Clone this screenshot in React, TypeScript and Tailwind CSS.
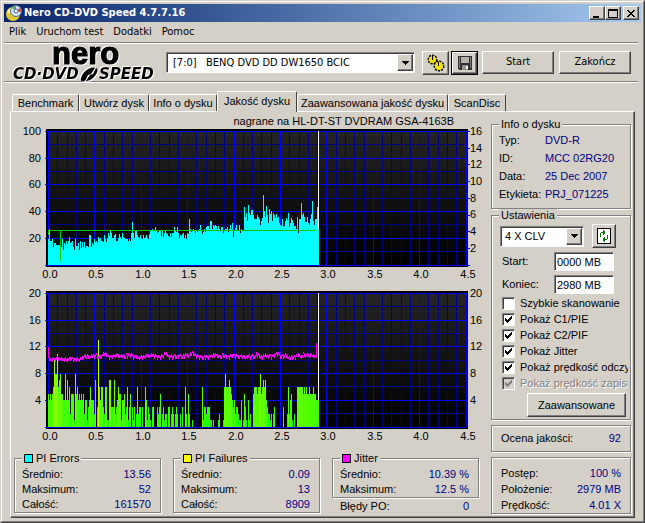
import type { ReactNode } from 'react';
import { clsx } from 'clsx';

const sans = "font-['Liberation_Sans',Arial,sans-serif]";
const tahoma = "font-['DejaVu_Sans_Condensed','Noto_Sans',sans-serif]";
const raised = 'bg-[#d4d0c8] border border-t-white border-l-white border-b-[#404040] border-r-[#404040] shadow-[inset_-1px_-1px_0_#808080]';
const sunken = 'bg-white border border-t-[#808080] border-l-[#808080] border-b-white border-r-white shadow-[inset_1px_1px_0_#404040]';
const etched = 'border border-[#808080] shadow-[1px_1px_0_#fff,inset_1px_1px_0_#fff]';

// one sample per pixel column, in pixels
const pie = [
  26, 36, 24, 24, 26, 18, 22, 22, 20, 20, 20, 20, 20, 18, 26, 15, 22, 20, 24, 21, 24, 28, 22, 23, 24, 18, 15, 26, 19, 19,
  22, 15, 24, 17, 23, 18, 23, 17, 19, 19, 18, 30, 30, 18, 22, 20, 26, 23, 24, 22, 28, 26, 27, 24, 24, 23, 30, 26, 23, 27,
  32, 29, 34, 32, 27, 27, 30, 31, 24, 24, 27, 31, 28, 26, 32, 28, 27, 26, 26, 26, 24, 26, 24, 32, 43, 32, 27, 35, 35, 30,
  28, 27, 30, 27, 26, 30, 27, 28, 30, 27, 26, 31, 34, 34, 36, 34, 34, 38, 35, 32, 33, 34, 34, 29, 34, 28, 32, 35, 32,
  31, 29, 28, 32, 28, 32, 32, 38, 34, 33, 38, 32, 27, 30, 29, 31, 32, 27, 30, 26, 32, 31, 46, 36, 33, 34, 36, 34, 32,
  35, 33, 35, 36, 40, 34, 31, 33, 36, 33, 38, 39, 39, 36, 44, 44, 36, 40, 39, 40, 39, 36, 39, 36, 35, 38, 38, 32, 34, 36,
  36, 38, 33, 36, 40, 36, 42, 28, 34, 37, 40, 34, 34, 40, 32, 36, 34, 34, 58, 48, 52, 44, 60, 52, 50, 55, 55, 50, 46,
  46, 46, 50, 48, 46, 40, 44, 47, 70, 54, 48, 59, 50, 42, 56, 51, 54, 44, 52, 50, 47, 51, 47, 48, 42, 40, 39, 46, 38, 39,
  44, 47, 45, 52, 38, 42, 47, 45, 42, 39, 39, 36, 48, 32, 46, 46, 62, 50, 52, 48, 43, 43, 48, 42, 40, 46, 51, 64, 44, 40,
  46, 46, 58, 36,
];
const pif = [
  5, 4, 5, 4, 5, 6, 10, 8, 8, 11, 6, 7, 8, 5, 5, 4, 4, 8, 4, 7, 4, 6, 2, 5, 5, 5, 1, 8, 5, 6,
  4, 5, 4, 5, 4, 5, 2, 4, 4, 1, 3, 4, 6, 4, 4, 4, 2, 7, 0, 3, 13, 6, 4, 6, 6, 3, 2, 6, 6, 1,
  1, 7, 7, 3, 3, 3, 7, 2, 3, 4, 6, 5, 5, 1, 4, 4, 5, 2, 3, 6, 1, 3, 5, 0, 3, 1, 3, 0, 2, 6,
  2, 3, 3, 0, 3, 0, 0, 6, 4, 1, 3, 2, 1, 0, 3, 3, 0, 0, 0, 3, 2, 3, 5, 0, 2, 3, 1, 2, 2, 0,
  3, 3, 0, 2, 3, 2, 0, 2, 3, 2, 0, 0, 2, 0, 3, 0, 0, 6, 2, 0, 5, 2, 0, 0, 1, 0, 0, 0, 0, 0,
  0, 0, 0, 0, 6, 1, 3, 3, 2, 3, 3, 3, 1, 1, 0, 1, 0, 0, 0, 0, 1, 2, 0, 0, 0, 1, 6, 8, 6, 6,
  6, 7, 6, 5, 4, 3, 4, 2, 3, 3, 2, 1, 1, 4, 0, 1, 5, 3, 1, 0, 4, 1, 2, 0, 0, 5, 6, 6, 6, 5,
  6, 6, 8, 5, 6, 7, 6, 7, 4, 3, 2, 2, 1, 2, 0, 2, 3, 0, 0, 0, 0, 0, 0, 0, 0, 3, 0, 0, 0, 2,
  6, 2, 4, 5, 1, 0, 2, 0, 0, 6, 6, 6, 6, 6, 6, 5, 6, 5, 6, 5, 5, 6, 5, 5, 5, 6, 5, 5, 4, 4, 4,
];
const jitter =
  '089a98998789989a98a99888899998a988776575677565654676665343456767656554566565674646545767678776' +
  '7676565664546567677566343567657656766556756454653423456567677867677665645455666745656767' +
  '5655565667657667766576567636457675646565575654343567566457878677675645766346545745656';

const px = 34;
const py = 3;
const plotW = 418;
const plotH = 134;

function Chart({ label, left, right, rightTicks, children }: {
  label: string; left: string[]; right: string[]; rightTicks?: boolean; children: ReactNode;
}) {
  const cols = Array.from({ length: 46 }, (_, i) => i);
  const rows = Array.from({ length: 11 }, (_, i) => i);
  const id = label.replace(/ /g, '');
  return (
    <svg viewBox="0 0 470 156" role="img" aria-label={label} className={clsx('block h-auto w-full overflow-visible text-[11px]', sans)}>
      <defs>
        <linearGradient id={id} x1="0" y1="0" x2="0" y2="1">
          <stop offset="0" stopColor="#242424" />
          <stop offset="1" stopColor="#000" />
        </linearGradient>
      </defs>
      <g shapeRendering="crispEdges">
        <rect x="32" y="1" width="422" height="138" fill="#000" />
        <rect x={px} y={py} width={plotW} height={plotH} fill={`url(#${id})`} />
        {cols.filter((i) => i % 5).map((i) => (
          <rect key={i} x={px + Math.round(i * 9.28)} y={py} width="1" height={plotH} fill="#000084" />
        ))}
        {rows.filter((i) => i % 2).map((i) => (
          <rect key={i} x={px} y={py + Math.round(i * 13.35)} width={plotW} height="1" fill="#000084" />
        ))}
        {cols.filter((i) => i % 5 === 0).map((i) => (
          <rect key={i} x={px + Math.round(i * 9.28)} y={py} width="1" height={plotH} fill="#0000ff" />
        ))}
        {rows.filter((i) => i % 2 === 0).map((i) => (
          <rect key={i} x="31" y={py + Math.round(i * 13.35)} width={plotW + 3} height="1" fill="#0000ff" />
        ))}
        {rightTicks && Array.from({ length: 17 }, (_, i) => (
          <rect key={i} x="452" y={py + Math.round(i * 8.35)} width={i % 2 ? 2 : 4} height="1" fill="#0000ff" />
        ))}
        {children}
      </g>
      {left.map((t, i) => (
        <text key={t} x="27" y={py + 4 + Math.round(i * 26.7)} textAnchor="end">{t}</text>
      ))}
      {right.map((t, i) => (
        <text key={t} x="456" y={py + 4 + Math.round((i * 133.5) / (rightTicks ? 8 : 5))}>{t}</text>
      ))}
      {cols.filter((i) => i % 5 === 0).map((i) => (
        <text key={i} x={px + 2 + Math.round(i * 9.28)} y="150" textAnchor="middle">{(i / 10).toFixed(1)}</text>
      ))}
    </svg>
  );
}

function Arrow() {
  return (
    <span className={clsx('pointer-events-none absolute top-[2px] right-[2px] bottom-[2px] flex w-4 items-center justify-center', raised)}>
      <svg width="7" height="4" shapeRendering="crispEdges"><path d="M0 0h7v1H0zM1 1h5v1H1zM2 2h3v1H2zM3 3h1v1H3z" /></svg>
    </span>
  );
}

function Row({ label, value }: { label: string; value: string }) {
  return (
    <div className="flex justify-between">
      <dt>{label}</dt>
      <dd className="text-[#000080]">{value}</dd>
    </div>
  );
}

function Stats({ title, swatch, rows }: { title: string; swatch: string; rows: string[][] }) {
  return (
    <fieldset className={clsx('pr-[9px] pl-[7px]', etched)}>
      <legend className="flex items-center gap-[3px] bg-[#d4d0c8] px-[2px] leading-[14px]">
        <span className={clsx('size-[9px] border border-black', swatch)} />
        {title}
      </legend>
      <dl className="pt-[2px] leading-[15px]">
        {rows.map(([l, v]) => <Row key={l} label={l} value={v} />)}
      </dl>
    </fieldset>
  );
}

function Check({ label, checked, disabled }: { label: string; checked?: boolean; disabled?: boolean }) {
  return (
    <label className={clsx('flex h-4 items-center gap-[5px] whitespace-nowrap', disabled && 'text-[#808080] [text-shadow:1px_1px_0_#fff]')}>
      <span className="relative flex shrink-0">
        <input type="checkbox" defaultChecked={checked} disabled={disabled}
          className={clsx('peer size-[13px] appearance-none disabled:bg-[#d4d0c8]', sunken)} />
        <svg width="7" height="7" fill="currentColor" shapeRendering="crispEdges"
          className="pointer-events-none absolute top-[3px] left-[3px] hidden peer-checked:block">
          <path d="M0 2h1v3H0zM1 3h1v3H1zM2 4h1v3H2zM3 3h1v3H3zM4 2h1v3H4zM5 1h1v3H5zM6 0h1v3H6z" />
        </svg>
      </span>
      {label}
    </label>
  );
}

function NeroLogo() {
  return (
    <svg width="150" height="38" viewBox="0 0 150 38" role="img" aria-label="nero CD-DVD Speed"
      className="mr-[4px] ml-[8px] shrink-0 overflow-visible [filter:drop-shadow(1px_1px_0_#fff)_drop-shadow(-1px_-1px_0_#fff)]">
      <text x="40" y="20" fontSize="31" fontWeight="bold" stroke="#000" strokeWidth="1.200" className={sans}>nero</text>
      <g fontSize="15" fontStyle="italic" fontWeight="bold" className="font-['DejaVu_Sans',sans-serif]">
        <text x="1" y="35">CD·DVD</text>
        <text x="87" y="35">SPEED</text>
      </g>
      <path d="M76 25c3-1 5-2 7-1l-4 6-3 1-3 6c-3 1-5 0-4-3 1-4 4-7 7-9z" />
      <path d="M84 24c3 1 1 6-2 9-3 3-6 4-8 4l4-6 3-1z" />
    </svg>
  );
}

function TitleButton({ name, d }: { name: string; d: string }) {
  return (
    <button aria-label={name} className={clsx('flex h-[14px] w-4 items-center justify-center', raised)}>
      <svg width="10" height="9" shapeRendering="crispEdges" fill="none" stroke="#000"><path d={d} /></svg>
    </button>
  );
}

const tabs = [
  ['Benchmark', 'w-[67px]'],
  ['Utwórz dysk', 'w-[70px]'],
  ['Info o dysku', 'w-[68px]'],
  ['Jakość dysku', 'w-[80px]'],
  ['Zaawansowana jakość dysku', 'w-[151px]'],
  ['ScanDisc', 'w-[58px]'],
];

export default function App() {
  const base = py + 134;
  const jitterPath = jitter.split('').map((c, i) => {
    const h = 2 + ((i * 5) % 3);
    return `M${px + i} ${59 + parseInt(c, 16)}h1v${h}h-1z`;
  }).join('');

  return (
    <div className={clsx('border border-t-[#d4d0c8] border-r-[#404040] border-b-[#404040] border-l-[#d4d0c8] bg-[#d4d0c8] text-[11px] text-black', sans)}>
      <div className="border border-t-white border-r-[#808080] border-b-[#808080] border-l-white p-[2px]">
        <header className="flex h-[18px] items-center bg-linear-to-r from-[#0a246a] to-[#a6caf0] px-[2px]">
          <svg width="16" height="16" viewBox="0 0 16 16">
            <circle cx="7" cy="9" r="7" fill="#e0c838" />
            <path d="M1 8c1-4 4-6 7-6l-1 6z" fill="#fff6a0" />
            <circle cx="10" cy="6" r="5.500" fill="#d8e4f0" stroke="#56708c" />
            <path d="M10 6 6 3a5 5 0 0 1 4-2z" fill="#48a868" />
            <path d="m10 6 4-3a5 5 0 0 1 1 4z" fill="#d04830" />
            <circle cx="10" cy="6" r="2" fill="#fff" stroke="#3868b8" />
          </svg>
          <h1 className={clsx('ml-[2px] flex-1 text-[11px] font-bold text-white', tahoma)}>Nero CD-DVD Speed 4.7.7.16</h1>
          <TitleButton name="Minimalizuj" d="M1 7h6M1 8h6" />
          <TitleButton name="Maksymalizuj" d="M0 1h9M0 .5h9v8H0z" />
          <span className="w-[2px]" />
          <TitleButton name="Zamknij" d="m1 1 7 7M2 1l7 7M8 1 1 8M9 1 2 8" />
        </header>

        <nav className={clsx('mr-[3px] flex h-[21px] items-center gap-[10px] border-b border-[#808080] pl-[5px] text-[11px]', tahoma)}>
          <button>Plik</button>
          <button>Uruchom test</button>
          <button>Dodatki</button>
          <button>Pomoc</button>
        </nav>

        <div className={clsx('mr-[3px] flex h-[39px] items-center border-t border-b border-t-white border-b-[#808080] text-[11px]', tahoma)}>
          <NeroLogo />
          <div className="relative min-w-0 flex-1">
            <select aria-label="Napęd" className={clsx('block h-[21px] w-full appearance-none pt-px pl-[6px]', sunken)}>
              <option>[7:0]&nbsp;&nbsp; BENQ DVD DD DW1650 BCIC</option>
            </select>
            <Arrow />
          </div>
          <button aria-label="Opcje" className={clsx('ml-[7px] flex h-6 w-[27px] items-center justify-center', raised)}>
            <svg width="18" height="18" viewBox="0 0 18 18">
              <g fill="#f0e000" stroke="#000">
                <circle cx="5.500" cy="5.500" r="4" strokeDasharray="2 1" strokeWidth="2" />
                <circle cx="5.500" cy="5.500" r="3.500" stroke="none" />
                <circle cx="12" cy="12" r="4.500" strokeDasharray="2 1" strokeWidth="2" />
                <circle cx="12" cy="12" r="4" stroke="none" />
              </g>
              <path d="M5.500 2v4M11.500 8v4" stroke="#000" />
            </svg>
          </button>
          <span className="ml-[2px] border border-black">
            <button aria-label="Zapisz" className={clsx('flex h-[22px] w-[25px] items-center justify-center', raised)}>
              <svg width="14" height="14" shapeRendering="crispEdges">
                <path d="M0 0h14v14H1l-1-1z" fill="#303030" />
                <path d="M3 1h8v6H3z" fill="#b8b4ac" />
                <path d="M1 1h1v11H1zM12 1h1v11h-1z" fill="#808080" />
                <path d="M4 9h6v5H4z" fill="#909090" />
                <path d="M8 10h2v3H8z" fill="#fff" />
              </svg>
            </button>
          </span>
          <button className={clsx('ml-1 h-[23px] w-[72px]', raised)}>Start</button>
          <button className={clsx('mr-[7px] ml-[5px] h-[23px] w-[72px]', raised)}>Zakończ</button>
        </div>

        <div className="mr-[3px] h-px bg-white" />

        <main className="px-[6px] pt-2 pb-px">
          <div role="tablist" className="flex items-end pl-[2px]">
            {tabs.map(([name, w]) => {
              const on = name === 'Jakość dysku';
              return (
                <button key={name} role="tab" aria-selected={on}
                  className={clsx('rounded-t-[2px] border border-t-white border-r-[#404040] border-b-0 border-l-white bg-[#d4d0c8] whitespace-nowrap', w, on ? 'relative -mb-px h-[21px] pb-[2px]' : 'h-[17px]')}>
                  {name}
                </button>
              );
            })}
          </div>

          <div className="flex gap-[7px] border border-t-white border-r-[#404040] border-b-[#404040] border-l-white pr-[3px] pb-[3px] pl-[3px] shadow-[inset_-1px_-1px_0_#808080]">
            <section className="min-w-0 flex-1">
              <p className="pt-[3px] pr-[30px] text-right leading-[13px]">nagrane na HL-DT-ST DVDRAM GSA-4163B</p>
              <Chart label="PI Errors" left={['100', '80', '60', '40', '20']} right={['16', '14', '12', '10', '8', '6', '4', '2']} rightTicks>
                <path fill="#00ffff" d={pie.map((h, i) => i < 271 ? `M${px + i} ${base}v-${h}h1v${h}z` : '').join('')} />
                <path fill="#00ffff" d={`M302 ${base}v-36h3v36z`} />
                <path fill="#00c800" d="M34 102h268v1H34zM34 102h1v5h-1zM46 102h1v31h-1z" />
                <rect x="304" y={py} width="1" height="98" fill="#fff" />
              </Chart>
              <div className="h-[6px]" />
              <Chart label="PI Failures" left={['20', '16', '12', '8', '4']} right={['20', '16', '12', '8', '4']}>
                {pif.map((v, i) => v > 0 && i < 271 && (
                  <rect key={i} x={px + i} y={base - Math.round(v * 6.67)} width="1" height={Math.round(v * 6.67)} fill={`rgb(${Math.min(v * 15, 225)},255,0)`} />
                ))}
                <path d={jitterPath} fill="#ff00ff" />
                <path d="M34 57h1v11h-1zM302 53h1v15h-1z" fill="#ff00ff" />
                <rect x="304" y={py} width="1" height="107" fill="#fff" />
              </Chart>

              <div className="mt-[5px] grid grid-cols-3 items-start gap-3 pr-[5px]">
                <Stats title="PI Errors" swatch="bg-[#00ffff]" rows={[['Średnio:', '13.56'], ['Maksimum:', '52'], ['Całość:', '161570']]} />
                <Stats title="PI Failures" swatch="bg-[#ffff00]" rows={[['Średnio:', '0.09'], ['Maksimum:', '13'], ['Całość:', '8909']]} />
                <div>
                  <Stats title="Jitter" swatch="bg-[#ff00ff]" rows={[['Średnio:', '10.39 %'], ['Maksimum:', '12.5 %']]} />
                  <dl className="pt-px pr-[10px] pl-2 leading-[15px]"><Row label="Błędy PO:" value="0" /></dl>
                </div>
              </div>
            </section>

            <aside className="w-[140px] shrink-0 pt-[6px]">
              <fieldset className={clsx('pb-[5px] pl-[7px]', etched)}>
                <legend className="bg-[#d4d0c8] px-[2px] leading-[13px]">Info o dysku</legend>
                <dl className="grid grid-cols-[46px_1fr] leading-[18px] whitespace-nowrap [&>dd]:text-[#000080]">
                  <dt>Typ:</dt><dd>DVD-R</dd>
                  <dt>ID:</dt><dd>MCC 02RG20</dd>
                  <dt>Data:</dt><dd>25 Dec 2007</dd>
                  <dt>Etykieta:</dt><dd>PRJ_071225</dd>
                </dl>
              </fieldset>

              <fieldset className={clsx('min-w-0 pb-[2px] pl-[7px]', etched)}>
                <legend className="bg-[#d4d0c8] px-[2px] leading-[13px]">Ustawienia</legend>
                <div className="flex items-center gap-2 pt-[2px] pl-px">
                  <div className="relative w-[84px]">
                    <select aria-label="Prędkość" className={clsx('block h-[21px] w-full appearance-none pl-[4px]', sunken)}>
                      <option>4 X CLV</option>
                    </select>
                    <Arrow />
                  </div>
                  <button aria-label="Odśwież" className={clsx('flex size-6 items-center justify-center', raised)}>
                    <svg width="14" height="16" shapeRendering="crispEdges">
                      <path d="M.5.5h13v15H.5z" fill="#fff" stroke="#000" />
                      <path d="M3 5h1v4H3zM4 4h4v1H4zM6 2h1v5H6zM7 3h1v3H7zM10 7h1v4h-1zM6 11h4v1H6zM7 9h1v5H7zM6 10h1v3H6z" fill="#008000" />
                    </svg>
                  </button>
                </div>
                <div className="grid grid-cols-[52px_60px] items-center gap-y-1 pt-1 pl-[3px]">
                  <label htmlFor="start">Start:</label>
                  <input id="start" defaultValue="0000 MB" className={clsx('h-[19px] w-full px-[2px]', sunken)} />
                  <label htmlFor="end">Koniec:</label>
                  <input id="end" defaultValue="2980 MB" className={clsx('h-[19px] w-full px-[2px]', sunken)} />
                </div>
                <div className="mr-[2px] overflow-hidden pt-px pl-[3px]">
                  <Check label="Szybkie skanowanie" />
                  <Check label="Pokaż C1/PIE" checked />
                  <Check label="Pokaż C2/PIF" checked />
                  <Check label="Pokaż Jitter" checked />
                  <Check label="Pokaż prędkość odczytu" checked />
                  <Check label="Pokaż prędkość zapisu" checked disabled />
                </div>
                <button className={clsx('mt-[2px] mr-1 ml-auto block h-6 w-[99px]', raised)}>Zaawansowane</button>
              </fieldset>

              <dl className={clsx('mt-[5px] h-[27px] pr-[9px] pl-[9px] leading-[25px]', etched)}>
                <Row label="Ocena jakości:" value="92" />
              </dl>
              <dl className={clsx('mt-[5px] px-[9px] pt-[7px] leading-4', etched)}>
                <Row label="Postęp:" value="100 %" />
                <Row label="Położenie:" value="2979 MB" />
                <Row label="Prędkość:" value="4.01 X" />
              </dl>
            </aside>
          </div>
        </main>
      </div>
    </div>
  );
}
